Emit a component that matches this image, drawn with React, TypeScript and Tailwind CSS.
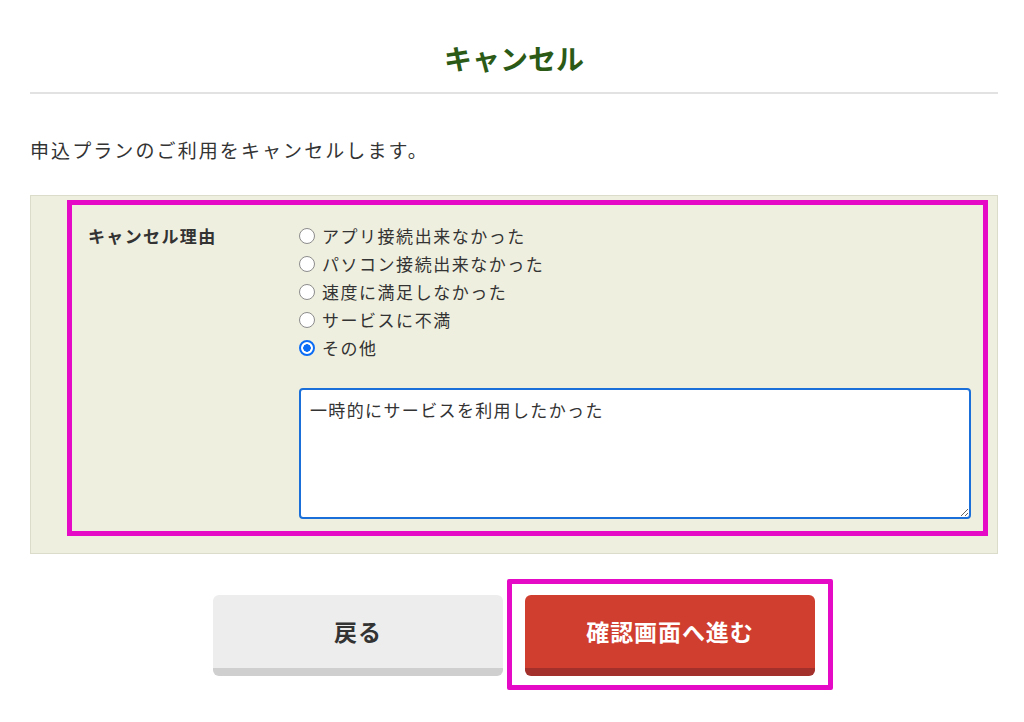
import React from "react";

const reasons = [
  "アプリ接続出来なかった",
  "パソコン接続出来なかった",
  "速度に満足しなかった",
  "サービスに不満",
  "その他",
];

export default function App() {
  return (
    <div
      className="w-[1024px] h-[722px] bg-white text-[#333333] overflow-hidden"
      style={{ fontFamily: '"Noto Sans CJK JP", "Noto Sans", sans-serif' }}
    >
      <div className="ml-[30px] w-[968px] pt-[40px]">
        <h1 className="text-center text-[28px] leading-[36px] font-bold text-[#2b5a17]">
          キャンセル
        </h1>
        <div className="mt-[16px] h-[2px] bg-[#e2e2e2]" />
        <p className="mt-[42px] text-[19px] leading-[28px] tracking-[0.11em] text-[#333333]">
          申込プランのご利用をキャンセルします。
        </p>

        <div className="mt-[31px] border border-[#dcdccb] bg-[#efefdf] pt-[4px] pl-[36px] pr-[9px] pb-[17px]">
          <div className="border-[5px] border-[#e40ac6] pt-[17px] pl-[16px] pr-[12px] pb-[12px] flex">
            <div className="w-[211px] shrink-0 text-[17px] leading-[28px] font-bold tracking-[0.08em] text-[#333333]">
              キャンセル理由
            </div>
            <div className="flex-1">
              <div className="flex flex-col">
                {reasons.map((r, i) => (
                  <label
                    key={r}
                    className="flex items-center h-[28px] text-[17px] tracking-[0.09em] text-[#333333]"
                  >
                    <input
                      type="radio"
                      name="reason"
                      defaultChecked={i === 4}
                      className="m-0 shrink-0 appearance-none w-[16px] h-[16px] rounded-full border border-[#8c8c8c] bg-white checked:border-[2px] checked:border-[#0a6cf5] checked:bg-[radial-gradient(circle,#0a6cf5_0,#0a6cf5_3.5px,#ffffff_4px)]"
                    />
                    <span className="ml-[7px]">{r}</span>
                  </label>
                ))}
              </div>
              <textarea
                defaultValue="一時的にサービスを利用したかった"
                className="mt-[26px] block w-[672px] h-[131px] border-2 border-[#1a6fd8] rounded-[4px] bg-white px-[9px] py-[8px] text-[17px] leading-[24px] tracking-[0.08em] text-[#333333] outline-none"
              />
            </div>
          </div>
        </div>

        <div className="mt-[41px] flex justify-center gap-[22px]">
          <button className="w-[290px] h-[81px] rounded-[6px] bg-[#ededed] border-b-[8px] border-[#cfcfcf] text-[23px] font-bold tracking-[0.04em] text-[#333333]">
            戻る
          </button>
          <div className="relative">
            <button className="w-[290px] h-[81px] rounded-[6px] bg-[#d03e2f] border-b-[8px] border-[#a3302a] text-[23px] font-bold tracking-[0.04em] text-white">
              確認画面へ進む
            </button>
            <div className="absolute left-[-18px] right-[-18px] top-[-16px] bottom-[-14px] border-[5px] border-[#e40ac6] rounded-[2px] pointer-events-none" />
          </div>
        </div>
      </div>
    </div>
  );
}
